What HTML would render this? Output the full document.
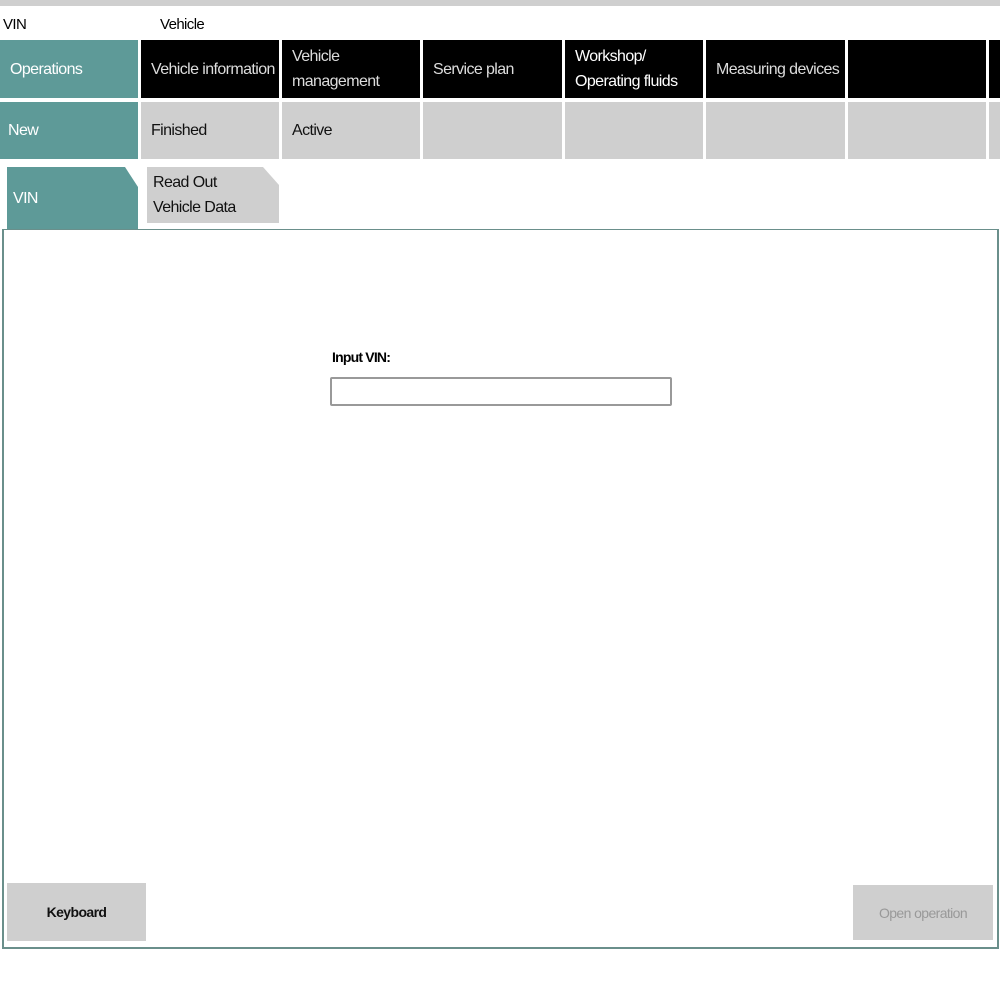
<!DOCTYPE html>
<html><head><style>
*{margin:0;padding:0;box-sizing:border-box}
body{width:1000px;height:1000px;background:#fff;position:relative;overflow:hidden;font-family:"Liberation Sans",sans-serif;font-size:16px;letter-spacing:-0.6px}
.a{position:absolute}
.c{position:absolute;display:flex;align-items:center;padding-left:10px;line-height:25px}
.k{background:#000;color:#ddd}
.g{background:#cfcfcf;color:#111}
.t{background:#5e9a98;color:#fff}
</style></head><body>
<div class="a" style="left:0;top:0;width:1000px;height:6px;background:#cfcfcf"></div>
<div class="a" style="left:3px;top:16px;font-size:15px">VIN</div>
<div class="a" style="left:160px;top:16px;font-size:15px">Vehicle</div>

<div class="c t" style="left:0;top:40px;width:138px;height:58px">Operations</div>
<div class="c k" style="left:141px;top:40px;width:138px;height:58px">Vehicle information</div>
<div class="c k" style="left:282px;top:40px;width:138px;height:58px">Vehicle<br>management</div>
<div class="c k" style="left:423px;top:40px;width:139px;height:58px">Service plan</div>
<div class="c k" style="left:565px;top:40px;width:138px;height:58px;color:#fff">Workshop/<br>Operating fluids</div>
<div class="c k" style="left:706px;top:40px;width:139px;height:58px">Measuring devices</div>
<div class="c k" style="left:848px;top:40px;width:138px;height:58px"></div>
<div class="c k" style="left:989px;top:40px;width:11px;height:58px"></div>

<div class="c t" style="left:0;top:102px;width:138px;height:57px;padding-left:8px">New</div>
<div class="c g" style="left:141px;top:102px;width:138px;height:57px">Finished</div>
<div class="c g" style="left:282px;top:102px;width:138px;height:57px">Active</div>
<div class="c g" style="left:423px;top:102px;width:139px;height:57px"></div>
<div class="c g" style="left:565px;top:102px;width:138px;height:57px"></div>
<div class="c g" style="left:706px;top:102px;width:139px;height:57px"></div>
<div class="c g" style="left:848px;top:102px;width:138px;height:57px"></div>
<div class="c g" style="left:989px;top:102px;width:11px;height:57px"></div>

<div class="c t" style="left:7px;top:167px;width:131px;height:63px;padding-left:6px;clip-path:polygon(0 0,118px 0,100% 20px,100% 100%,0 100%)">VIN</div>
<div class="c g" style="left:147px;top:167px;width:132px;height:56px;padding-left:6px;clip-path:polygon(0 0,116px 0,100% 18px,100% 100%,0 100%)">Read Out<br>Vehicle Data</div>

<div class="a" style="left:2px;top:229px;width:997px;height:720px;border:2px solid #6a8f8b;border-top-width:1px"></div>
<div class="a" style="left:332px;top:349px;font-size:14px;font-weight:bold;letter-spacing:-0.8px">Input VIN:</div>
<div class="a" style="left:330px;top:377px;width:342px;height:29px;border:2px solid #999;border-radius:2px"></div>

<div class="a g" style="left:7px;top:883px;width:139px;height:58px;display:flex;align-items:center;justify-content:center;font-size:14px;font-weight:bold;color:#111">Keyboard</div>
<div class="a g" style="left:853px;top:885px;width:140px;height:55px;display:flex;align-items:center;justify-content:center;font-size:14px;color:#999">Open operation</div>
</body></html>
